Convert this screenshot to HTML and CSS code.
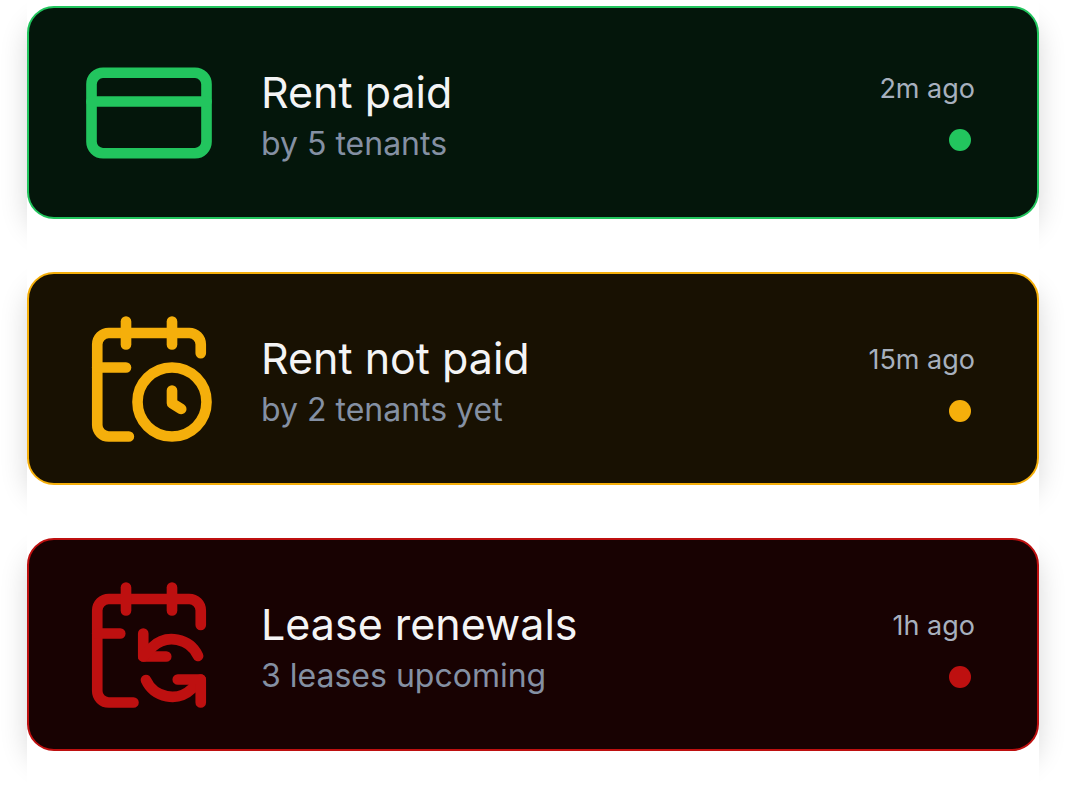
FILE: index.html
```html
<!DOCTYPE html>
<html lang="en">
<head>
    <meta charset="UTF-8">
    <meta name="viewport" content="width=device-width, initial-scale=1.0">
    <title>Notifications</title>
    <link rel="stylesheet" href="styles.css">
</head>
<body>
    <main class="notifications">
        <!-- Rent paid -->
        <article class="card paid">
            <svg class="icon" viewBox="0 0 24 24" aria-hidden="true">
                <rect x="2" y="5" width="20" height="14" rx="2"/>
                <path d="M2 10h20"/>
            </svg>
            <div class="text">
                <h2>Rent paid</h2>
                <p>by 5 tenants</p>
            </div>
            <div class="meta">
                <time>2m ago</time>
                <span class="dot"></span>
            </div>
        </article>

        <!-- Rent not paid -->
        <article class="card unpaid">
            <svg class="icon" viewBox="0 0 24 24" aria-hidden="true">
                <path d="M21 7.5V6a2 2 0 0 0-2-2H5a2 2 0 0 0-2 2v14a2 2 0 0 0 2 2h3.5"/>
                <path d="M16 2v4"/>
                <path d="M8 2v4"/>
                <path d="M3 10h5"/>
                <path d="M16 14v2.2l1.6 1"/>
                <circle cx="16" cy="16" r="6"/>
            </svg>
            <div class="text">
                <h2>Rent not paid</h2>
                <p>by 2 tenants yet</p>
            </div>
            <div class="meta">
                <time>15m ago</time>
                <span class="dot"></span>
            </div>
        </article>

        <!-- Lease renewals -->
        <article class="card renewal">
            <svg class="icon" viewBox="0 0 24 24" aria-hidden="true">
                <path d="M11 10v4h4"/>
                <path d="m11 14 1.535-1.605a5 5 0 0 1 8 1.5"/>
                <path d="M16 2v4"/>
                <path d="m21 18-1.535 1.605a5 5 0 0 1-8-1.5"/>
                <path d="M21 22v-4h-4"/>
                <path d="M21 8.5V6a2 2 0 0 0-2-2H5a2 2 0 0 0-2 2v14a2 2 0 0 0 2 2h4.3"/>
                <path d="M3 10h4"/>
                <path d="M8 2v4"/>
            </svg>
            <div class="text">
                <h2>Lease renewals</h2>
                <p>3 leases upcoming</p>
            </div>
            <div class="meta">
                <time>1h ago</time>
                <span class="dot"></span>
            </div>
        </article>
    </main>
</body>
</html>
```
FILE: styles.css
```css
* { box-sizing: border-box; }
body { margin: 0; background-color: #fff; font-family: Inter, sans-serif; }
h2, p { margin: 0; font-weight: 400; }

.notifications { display: flex; flex-direction: column; gap: 53px; padding: 6px 27px 48px; }

.card { position: relative; display: flex; align-items: center; min-height: 213px; padding: 0 62px 0 51px; border: 2px solid var(--accent); border-radius: 27px; background-color: var(--surface); }
.paid { --accent: #22c55e; --surface: #04160b; }
.unpaid { --accent: #f5af0b; --surface: #181102; }
.renewal { --accent: #be1010; --surface: #180202; }

/* Shadow shows only beside the card, not under it */
.card::before { content: ""; position: absolute; inset: -2px; z-index: -1; border-radius: 27px; box-shadow: 0 14px 28px rgba(0, 0, 0, 0.16); clip-path: polygon(-40px -40px, 0 -40px, 0 150%, 100% 150%, 100% -40px, calc(100% + 40px) -40px, calc(100% + 40px) 160%, -40px 160%); }

.icon { flex: none; width: 138px; height: 138px; fill: none; stroke: var(--accent); stroke-width: 1.85; stroke-linecap: round; stroke-linejoin: round; }

.text { flex: 1; margin-left: 43px; padding-top: 10px; }
.text h2 { font-size: 43px; line-height: 52px; color: #f4f4f5; }
.text p { font-size: 32px; line-height: 52px; color: #8490a3; }

.meta { display: flex; flex-direction: column; align-items: flex-end; gap: 24px; padding: 10px 0 2px; }
.paid .meta { padding-top: 0; }
.meta time { font-size: 27px; line-height: 32px; color: #a7b0be; }
.dot { width: 22px; height: 22px; margin-right: 4px; border-radius: 50%; background-color: var(--accent); }
```
